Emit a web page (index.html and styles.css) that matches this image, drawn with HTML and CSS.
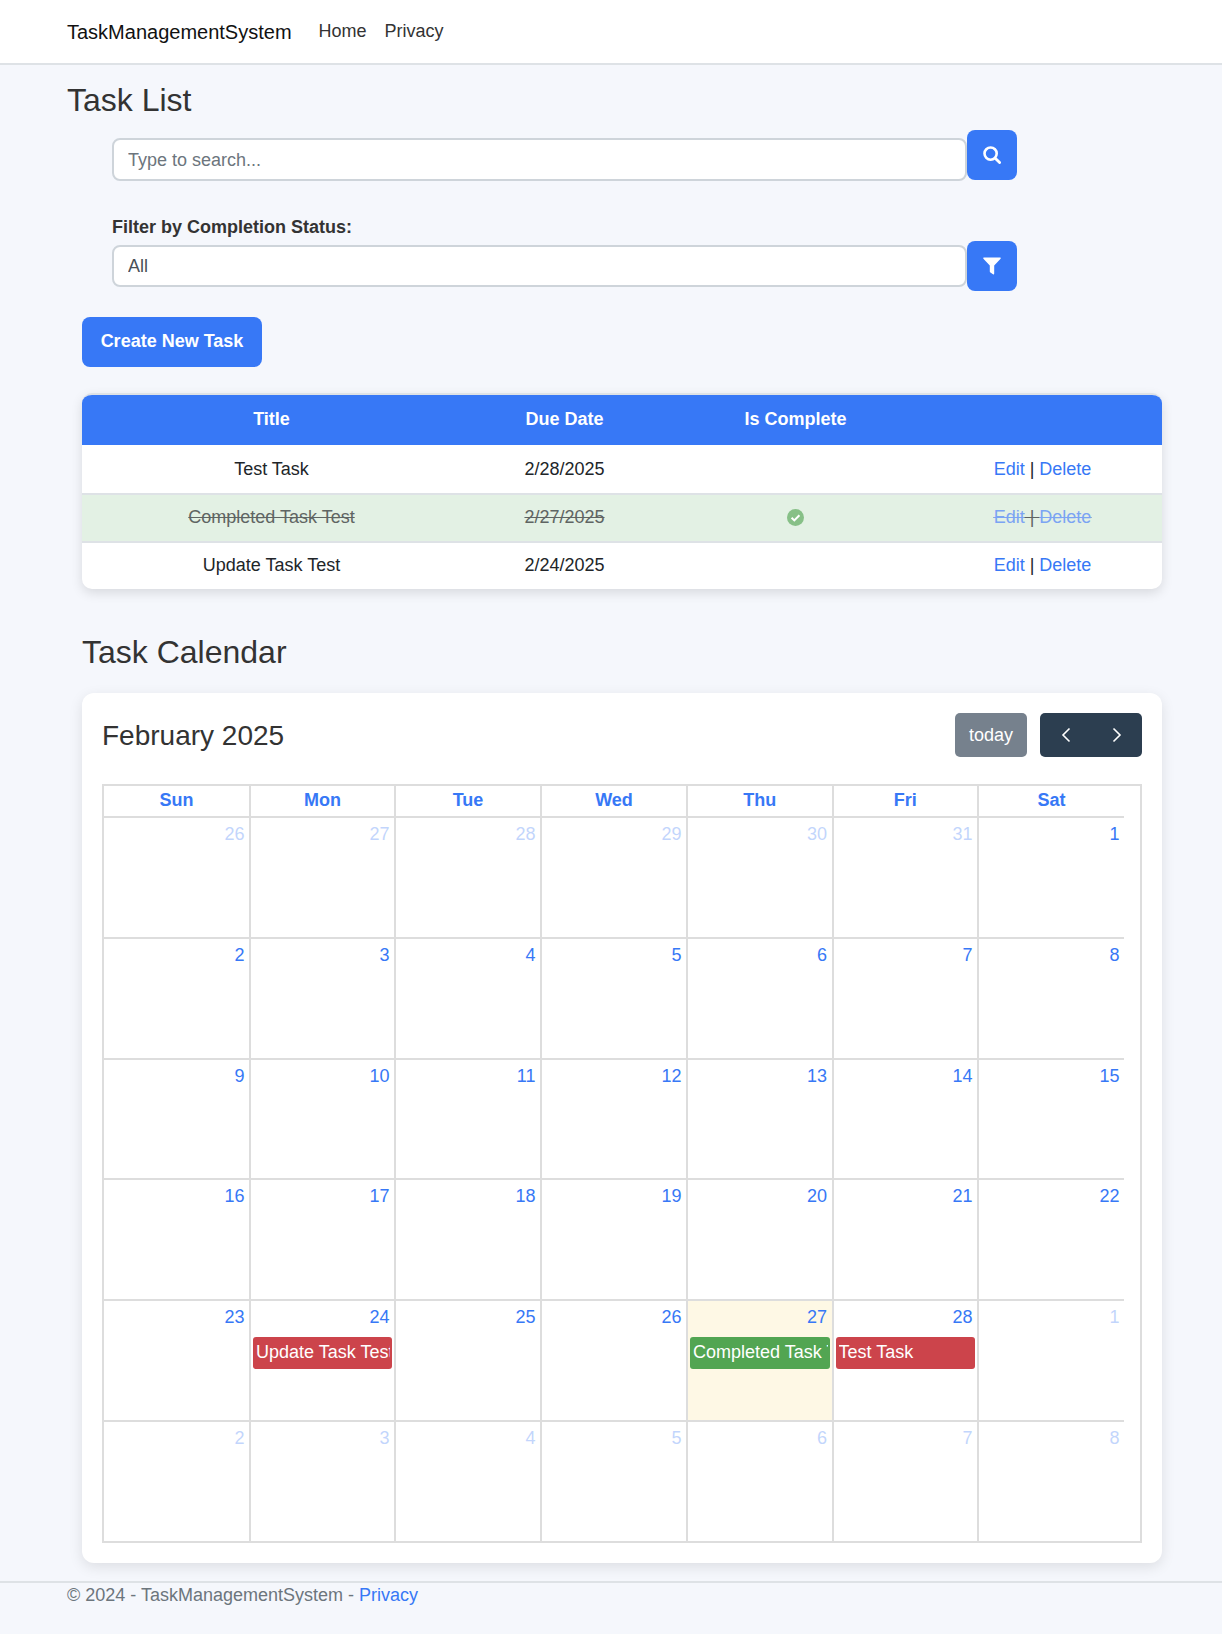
FILE: index.html
```html
<!DOCTYPE html>
<html lang="en">
<head>
  <meta charset="UTF-8" />
  <meta name="viewport" content="width=device-width, initial-scale=1.0"/>
  <title>Task List - TaskManagementSystem</title>
  <link rel="stylesheet" href="styles.css">
</head>
<body>

<header class="navbar">
  <a class="brand" href="#">TaskManagementSystem</a>
  <nav class="nav-links">
    <a href="#">Home</a>
    <a href="#">Privacy</a>
  </nav>
</header>

<main class="page">
  <h2 class="page-title">Task List</h2>

  <form class="search-row">
    <input class="field field-search" type="text" placeholder="Type to search...">
    <button class="icon-btn" type="button" aria-label="Search">
      <svg width="18" height="18" viewBox="0 0 18 18"><circle cx="7.6" cy="7.6" r="6.1" fill="none" stroke="#fff" stroke-width="2.6"/><path d="M12.2 12.2L16.6 16.6" stroke="#fff" stroke-width="2.8" stroke-linecap="round"/></svg>
    </button>
  </form>

  <form class="filter-form">
    <label class="filter-label" for="status">Filter by Completion Status:</label>
    <div class="filter-row">
      <select class="field field-select" id="status">
        <option>All</option>
        <option>Completed</option>
        <option>Not Completed</option>
      </select>
      <button class="icon-btn" type="button" aria-label="Filter">
        <svg width="18" height="18" viewBox="0 0 18 18"><path d="M1 0.5H17C17.7 0.5 18 1.2 17.6 1.8L11.2 8.6V16.6C11.2 17.4 10.5 17.7 10 17.3L7.4 15.4C7 15.1 6.8 14.8 6.8 14.4V8.6L0.4 1.8C0 1.2 0.3 0.5 1 0.5Z" fill="#fff"/></svg>
      </button>
    </div>
  </form>

  <section class="tasks">
    <a class="create-btn" href="#">Create New Task</a>

    <div class="table-wrap">
      <table class="task-table">
        <colgroup>
          <col class="col-title">
          <col class="col-date">
          <col class="col-complete">
          <col class="col-actions">
        </colgroup>
        <thead>
          <tr>
            <th>Title</th>
            <th>Due Date</th>
            <th>Is Complete</th>
            <th></th>
          </tr>
        </thead>
        <tbody>
          <tr>
            <td>Test Task</td>
            <td>2/28/2025</td>
            <td></td>
            <td><a href="#">Edit</a> | <a href="#">Delete</a></td>
          </tr>
          <tr class="done">
            <td>Completed Task Test</td>
            <td>2/27/2025</td>
            <td>
              <svg class="check" width="17" height="17" viewBox="0 0 17 17"><circle cx="8.5" cy="8.5" r="8.5" fill="#87c087"/><path d="M4.6 8.8L7.3 11.4L12.4 6.2" fill="none" stroke="#fff" stroke-width="2"/></svg>
            </td>
            <td><a href="#">Edit</a> | <a href="#">Delete</a></td>
          </tr>
          <tr>
            <td>Update Task Test</td>
            <td>2/24/2025</td>
            <td></td>
            <td><a href="#">Edit</a> | <a href="#">Delete</a></td>
          </tr>
        </tbody>
      </table>
    </div>

    <h2 class="calendar-title">Task Calendar</h2>

    <div class="calendar-card">
      <div class="toolbar">
        <h2 class="month">February 2025</h2>
        <div class="toolbar-btns">
          <button class="today-btn" type="button">today</button>
          <div class="nav-group">
            <button type="button" aria-label="prev">
              <svg width="10" height="16" viewBox="0 0 10 16"><path d="M8.5 1.5L2 8L8.5 14.5" fill="none" stroke="#fff" stroke-width="1.6"/></svg>
            </button>
            <button type="button" aria-label="next">
              <svg width="10" height="16" viewBox="0 0 10 16"><path d="M1.5 1.5L8 8L1.5 14.5" fill="none" stroke="#fff" stroke-width="1.6"/></svg>
            </button>
          </div>
        </div>
      </div>

      <div class="cal-grid">
        <div class="dow">Sun</div><div class="dow">Mon</div><div class="dow">Tue</div><div class="dow">Wed</div><div class="dow">Thu</div><div class="dow">Fri</div><div class="dow">Sat</div>

        <div class="day other"><span class="num">26</span></div>
        <div class="day other"><span class="num">27</span></div>
        <div class="day other"><span class="num">28</span></div>
        <div class="day other"><span class="num">29</span></div>
        <div class="day other"><span class="num">30</span></div>
        <div class="day other"><span class="num">31</span></div>
        <div class="day"><span class="num">1</span></div>

        <div class="day"><span class="num">2</span></div>
        <div class="day"><span class="num">3</span></div>
        <div class="day"><span class="num">4</span></div>
        <div class="day"><span class="num">5</span></div>
        <div class="day"><span class="num">6</span></div>
        <div class="day"><span class="num">7</span></div>
        <div class="day"><span class="num">8</span></div>

        <div class="day"><span class="num">9</span></div>
        <div class="day"><span class="num">10</span></div>
        <div class="day"><span class="num">11</span></div>
        <div class="day"><span class="num">12</span></div>
        <div class="day"><span class="num">13</span></div>
        <div class="day"><span class="num">14</span></div>
        <div class="day"><span class="num">15</span></div>

        <div class="day"><span class="num">16</span></div>
        <div class="day"><span class="num">17</span></div>
        <div class="day"><span class="num">18</span></div>
        <div class="day"><span class="num">19</span></div>
        <div class="day"><span class="num">20</span></div>
        <div class="day"><span class="num">21</span></div>
        <div class="day"><span class="num">22</span></div>

        <div class="day"><span class="num">23</span></div>
        <div class="day"><span class="num">24</span><div class="event event-open"><div class="event-text">Update Task Test</div></div></div>
        <div class="day"><span class="num">25</span></div>
        <div class="day"><span class="num">26</span></div>
        <div class="day today"><span class="num">27</span><div class="event event-done"><div class="event-text">Completed Task Test</div></div></div>
        <div class="day"><span class="num">28</span><div class="event event-open"><div class="event-text">Test Task</div></div></div>
        <div class="day other"><span class="num">1</span></div>

        <div class="day other"><span class="num">2</span></div>
        <div class="day other"><span class="num">3</span></div>
        <div class="day other"><span class="num">4</span></div>
        <div class="day other"><span class="num">5</span></div>
        <div class="day other"><span class="num">6</span></div>
        <div class="day other"><span class="num">7</span></div>
        <div class="day other"><span class="num">8</span></div>
      </div>
    </div>
  </section>
</main>

<footer class="footer">
  &copy; 2024 - TaskManagementSystem - <a href="#">Privacy</a>
</footer>

</body>
</html>
```

FILE: styles.css
```css
* {
  box-sizing: border-box;
}

body {
  margin: 0;
  min-height: 1634px;
  font-family: "Liberation Sans", Arial, sans-serif;
  font-size: 18px;
  line-height: 1.5;
  color: #212529;
  background: #f5f7fc;
}

a {
  color: #3778f6;
  text-decoration: none;
}

/* navbar */
.navbar {
  height: 65px;
  display: flex;
  align-items: center;
  padding: 0 67px;
  background: #fff;
  border-bottom: 2px solid #dee2e6;
}

.brand {
  font-size: 20px;
  color: #111;
  margin-right: 27px;
}

.nav-links {
  display: flex;
  gap: 18px;
}

.nav-links a {
  color: #333;
}

/* page */
.page {
  padding: 16px 60px 0 67px;
}

.page-title,
.calendar-title {
  margin: 0;
  font-size: 32px;
  font-weight: 400;
  line-height: 38px;
  color: #333;
}

.page-title {
  margin-bottom: 11px;
}

/* search and filter */
.search-row,
.filter-row {
  display: flex;
  align-items: flex-start;
}

.search-row {
  width: 905px;
  margin-left: 45px;
  margin-bottom: 33px;
}

.filter-form {
  width: 905px;
  margin-left: 45px;
}

.filter-label {
  display: block;
  font-weight: 700;
  color: #333;
}

.field {
  flex: 1;
  padding: 0 14px;
  font-family: inherit;
  font-size: 18px;
  color: #495057;
  background: #fff;
  border: 2px solid #ced4da;
  border-radius: 8px;
  outline: none;
  appearance: none;
}

.field::placeholder {
  color: #6c757d;
}

.field-search {
  height: 43px;
  margin-top: 8px;
  padding-top: 1px;
}

.field-select {
  height: 42px;
  margin-top: 4px;
}

.icon-btn {
  width: 50px;
  height: 50px;
  display: flex;
  align-items: center;
  justify-content: center;
  flex-shrink: 0;
  padding: 0;
  background: #3778f6;
  border: none;
  border-radius: 8px;
}

/* task table */
.tasks {
  margin-top: 26px;
  margin-left: 15px;
}

.create-btn {
  width: 180px;
  height: 50px;
  display: flex;
  align-items: center;
  justify-content: center;
  padding-bottom: 2px;
  color: #fff;
  font-weight: 700;
  background: #3778f6;
  border-radius: 8px;
}

.table-wrap {
  margin-top: 26px;
  border-top: 2px solid #dee2e6;
  border-radius: 10px;
  overflow: hidden;
  background: #fff;
  box-shadow: 0 4px 12px rgba(0,0,0,0.12);
}

.task-table {
  width: 100%;
  table-layout: fixed;
  border-collapse: collapse;
  text-align: center;
}

.col-title { width: 379px; }
.col-date { width: 207px; }
.col-complete { width: 255px; }
.col-actions { width: 239px; }

.task-table th {
  height: 50px;
  padding: 0 0 2px;
  color: #fff;
  font-weight: 700;
  background: #3778f6;
}

.task-table td {
  height: 49px;
  padding: 0;
  border-bottom: 2px solid #dee2e6;
}

.task-table tbody tr:last-child td {
  height: 47px;
  padding-bottom: 1px;
  border-bottom: none;
}

.task-table tr.done td {
  height: 48px;
  padding-bottom: 2px;
  color: #5f6563;
  text-decoration: line-through;
  background: #e3f1e4;
}

.task-table tr.done a {
  color: #7ba4f3;
  text-decoration: line-through;
}

.check {
  display: block;
  margin: 0 auto;
}

/* calendar */
.calendar-title {
  margin-top: 44px;
  margin-bottom: 22px;
}

.calendar-card {
  padding: 20px;
  background: #fff;
  border-radius: 12px;
  box-shadow: 0 4px 14px rgba(0,0,0,0.1);
}

.toolbar {
  display: flex;
  align-items: center;
  justify-content: space-between;
  height: 44px;
  margin-bottom: 27px;
}

.month {
  margin: 0;
  padding-top: 1px;
  font-size: 28px;
  font-weight: 400;
  color: #333;
}

.toolbar-btns {
  display: flex;
  gap: 13px;
}

.today-btn {
  width: 72px;
  height: 44px;
  padding: 0;
  font-family: inherit;
  font-size: 18px;
  color: #fff;
  background: #76818d;
  border: none;
  border-radius: 5px;
}

.nav-group {
  display: flex;
  background: #2c3e50;
  border-radius: 5px;
}

.nav-group button {
  width: 51px;
  height: 44px;
  display: flex;
  align-items: center;
  justify-content: center;
  padding: 0;
  background: transparent;
  border: none;
}

.cal-grid {
  display: grid;
  grid-template-columns: 145px 145px 146px 146px 145.5px 145.5px 147px;
  grid-template-rows: 32px repeat(5, 120.8px) 119px;
  padding-right: 16px;
  border: 2px solid #ddd;
}

.dow {
  display: flex;
  align-items: center;
  justify-content: center;
  padding-bottom: 2px;
  font-weight: 700;
  color: #3778f6;
  border-bottom: 2px solid #ddd;
  border-left: 2px solid #ddd;
}

.day {
  min-width: 0;
  border-bottom: 2px solid #ddd;
  border-left: 2px solid #ddd;
}

.dow:nth-child(7n+1),
.day:nth-child(7n+1) {
  border-left: none;
}

.day:nth-last-child(-n+7) {
  border-bottom: none;
}

.day.today {
  background: #fef8e5;
}

.num {
  display: block;
  height: 36px;
  padding: 3px 4.5px 0;
  text-align: right;
  color: #3778f6;
}

.other .num {
  opacity: 0.3;
}

.event {
  height: 32px;
  margin: 0 2px;
  padding: 0 2px 0 3px;
  color: #fff;
  line-height: 30px;
  border-radius: 3px;
}

.event-text {
  overflow: hidden;
  white-space: nowrap;
}

.event-open {
  background: #cc444b;
}

.event-done {
  background: #52a552;
}

/* footer */
.footer {
  margin-top: 18px;
  padding-left: 67px;
  line-height: 24px;
  color: #6c757d;
  border-top: 2px solid #dee2e6;
}
```
